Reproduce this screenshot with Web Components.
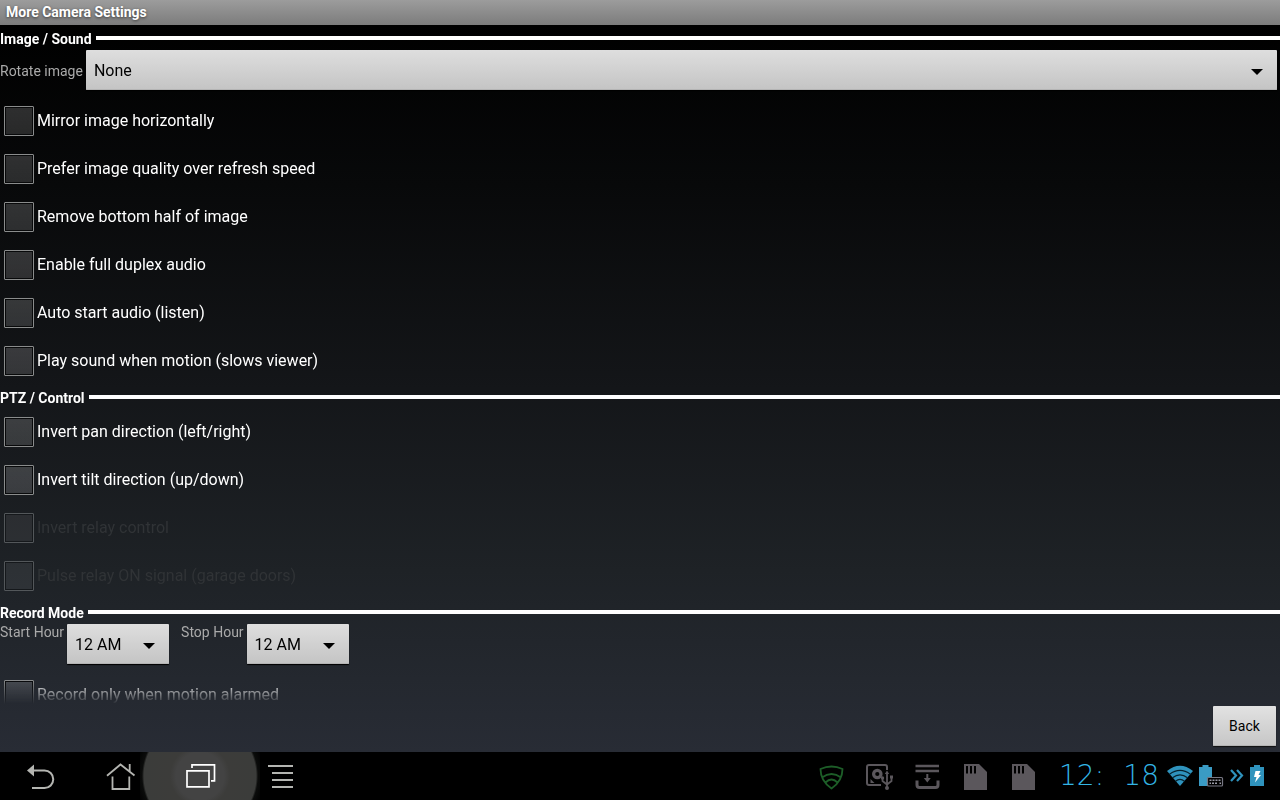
<!DOCTYPE html>
<html lang="en">
<head>
<meta charset="utf-8">
<title>More Camera Settings</title>
<style>
  html, body { height: 100%; margin: 0; background: #000; }
  body { font-family: Roboto, "Noto Sans", sans-serif; color: #fff; }
</style>
</head>
<body>
<settings-screen>
  <span slot="title">More Camera Settings</span>

  <settings-section>
    <span slot="heading">Image / Sound</span>
    <field-row>
      <spinner-field wide options="None|90 degrees|180 degrees|270 degrees">Rotate image</spinner-field>
    </field-row>
    <check-option>Mirror image horizontally</check-option>
    <check-option>Prefer image quality over refresh speed</check-option>
    <check-option>Remove bottom half of image</check-option>
    <check-option>Enable full duplex audio</check-option>
    <check-option>Auto start audio (listen)</check-option>
    <check-option>Play sound when motion (slows viewer)</check-option>
  </settings-section>

  <settings-section>
    <span slot="heading">PTZ / Control</span>
    <check-option>Invert pan direction (left/right)</check-option>
    <check-option>Invert tilt direction (up/down)</check-option>
    <check-option disabled>Invert relay control</check-option>
    <check-option disabled>Pulse relay ON signal (garage doors)</check-option>
  </settings-section>

  <settings-section>
    <span slot="heading">Record Mode</span>
    <field-row>
      <spinner-field options="12 AM|1 AM|2 AM|3 AM">Start Hour</spinner-field>
      <spinner-field options="12 AM|1 AM|2 AM|3 AM">Stop Hour</spinner-field>
    </field-row>
    <check-option>Record only when motion alarmed</check-option>
  </settings-section>

  <push-button slot="actions">Back</push-button>
  <system-bar slot="system"></system-bar>
</settings-screen>

<script>
function define(name, html, setup) {
  const template = document.createElement('template');
  template.innerHTML = html;
  customElements.define(name, class extends HTMLElement {
    constructor() {
      super();
      this.attachShadow({ mode: 'open' }).append(template.content.cloneNode(true));
    }
    connectedCallback() {
      if (setup) setup(this, this.shadowRoot);
    }
  });
}

define('settings-screen', `
  <style>
    :host { display: flex; flex-direction: column; height: 100vh; }
    header {
      flex: none; box-sizing: border-box; height: 25px; padding: 0 6px;
      background: linear-gradient(#9c9c9c, #7c7c7c);
    }
    h1 {
      margin: 0; font-size: 14px; line-height: 25px; font-weight: 700;
      text-shadow: 0 1px 3px rgba(0,0,0,.6);
    }
    .body {
      flex: 1; min-height: 0; display: flex; flex-direction: column;
      background: linear-gradient(#000 0%, #08090a 22%, #141619 50%, #1e2226 75%, #282c35 100%);
    }
    main {
      flex: 1; min-height: 0; overflow-y: auto; scrollbar-width: none; padding-top: 1px;
      mask-image: linear-gradient(#000 calc(100% - 24px), transparent);
    }
    footer { flex: none; display: flex; justify-content: flex-end; padding: 2px 4px 6px; }
  </style>
  <header><h1><slot name="title"></slot></h1></header>
  <div class="body">
    <main><slot></slot></main>
    <footer><slot name="actions"></slot></footer>
  </div>
  <slot name="system"></slot>
`);

define('settings-section', `
  <style>
    :host { display: block; }
    .head { display: flex; align-items: flex-start; gap: 4px; height: 23px; }
    h2 { margin: 0; font-size: 14px; line-height: 26px; font-weight: 700; }
    .rule { flex: 1; height: 4px; margin-top: 10px; background: #fff; }
  </style>
  <section>
    <div class="head"><h2><slot name="heading"></slot></h2><div class="rule"></div></div>
    <slot></slot>
  </section>
`);

define('field-row', `
  <style>
    :host { display: flex; gap: 12px; box-sizing: border-box; height: 48px; padding: 1px 3px 0 0; }
  </style>
  <slot></slot>
`);

define('check-option', `
  <style>
    :host { display: flex; align-items: center; height: 48px; padding-left: 4px; }
    label { display: flex; align-items: center; gap: 3px; font-size: 16px; line-height: 22px; }
    .text { padding-bottom: 1px; }
    input {
      appearance: none; flex: none; box-sizing: border-box; width: 30px; height: 30px; margin: 0;
      border: 1px solid #8a8c8c; border-radius: 1px;
      background: linear-gradient(rgba(255,255,255,.17), rgba(255,255,255,.14));
      box-shadow: inset 0 0 0 1px #08090a;
    }
    input:checked { background: #33b5e5; }
    :host([disabled]) .text { color: #303336; }
    :host([disabled]) input { border-color: #53575a; background: rgba(255,255,255,.07); box-shadow: inset 0 0 0 1px #15181b; }
  </style>
  <label><input type="checkbox"><span class="text"><slot></slot></span></label>
`, (host, root) => {
  root.querySelector('input').disabled = host.hasAttribute('disabled');
});

define('spinner-field', `
  <style>
    :host { display: flex; align-items: flex-start; gap: 3px; }
    :host([wide]) { flex: 1; align-items: center; height: 40px; }
    label { font-size: 14px; line-height: 17px; color: #aaa; white-space: nowrap; }
    :host([wide]) label { padding-top: 2px; }
    .box { display: grid; width: 102px; }
    :host([wide]) .box { width: auto; flex: 1; }
    select, svg { grid-area: 1 / 1; }
    select {
      appearance: none; width: 100%; height: 40px; margin: 0; padding: 2px 32px 0 8px;
      border: 0; border-radius: 1px; font: 16px/22px Roboto, "Noto Sans", sans-serif; color: #000;
      background: linear-gradient(#dedede, #c4c4c4);
      box-shadow: inset 0 -1px #b4b4b4, 0 1px 1px #000;
    }
    svg { justify-self: end; align-self: center; margin: 3px 14px 0 0; pointer-events: none; }
  </style>
  <label for="choice"><slot></slot></label>
  <div class="box">
    <select id="choice"></select>
    <svg width="12" height="6" viewBox="0 0 12 6"><path d="M0 0h12L6 6z" fill="#000"/></svg>
  </div>
`, (host, root) => {
  root.querySelector('select').replaceChildren(
    ...host.getAttribute('options').split('|').map(text => new Option(text)));
});

define('push-button', `
  <style>
    :host { display: block; }
    button {
      width: 63px; height: 40px; padding: 0; border: 0; border-radius: 1px;
      font: 14px/20px Roboto, "Noto Sans", sans-serif; color: #000;
      background: linear-gradient(#e2e2e2, #c6c6c6);
      box-shadow: inset 0 -1px #b4b4b4, 0 1px 1px #111;
    }
  </style>
  <button type="button"><slot></slot></button>
`);

define('system-bar', `
  <style>
    :host { display: flex; flex: none; justify-content: space-between; height: 48px; background: #000; overflow: hidden; }
    nav, .tray, .notices, .status, .clock { display: flex; align-items: center; }
    button { width: 80px; height: 48px; padding: 0; border: 0; background: none; display: grid; place-items: center; }
    .pressed {
      width: 120px; margin: 0 -20px;
      background: radial-gradient(circle, #434343 24px, #3c3c3a 30px, #3b3c3a 56px, #0b0c0b 58px, #000 66px);
    }
    svg { display: block; }
    .notices { gap: 16px; margin-right: 20px; }
    .clock {
      justify-content: space-between; width: 100px; margin-right: 8px;
      font: 200 28px/48px "DejaVu Sans Light", "DejaVu Sans", sans-serif; color: #33b5e5;
    }
    .status { gap: 6px; padding-right: 16px; }
  </style>
  <nav aria-label="System">
    <button type="button" aria-label="Back">
      <svg width="32" height="32" viewBox="0 0 32 32"><path d="M3 10.500l7-6v12z" fill="#b4b5b1"/><path d="M9 10.500h11.500a8.700 8.700 0 0 1 0 17.500H8" fill="none" stroke="#b4b5b1" stroke-width="2"/></svg>
    </button>
    <button type="button" aria-label="Home">
      <svg width="32" height="32" viewBox="0 0 32 32" fill="none" stroke="#b4b5b1" stroke-width="1.800"><path d="M3 15.700L16.500 4.500L30.500 15.500M25.700 4v8M8.500 16.500V29H25.300V16.500"/></svg>
    </button>
    <button type="button" class="pressed" aria-label="Recent apps">
      <svg width="32" height="32" viewBox="0 0 32 32" fill="none" stroke="#fff" stroke-width="1.700"><path d="M3 10.800h22v16H3zM8 8V4.800h22.500v16H27"/></svg>
    </button>
    <button type="button" aria-label="Menu">
      <svg width="32" height="32" viewBox="0 0 32 32" fill="none" stroke="#b4b5b1" stroke-width="2"><path d="M4 6h25M8 13h21M8 20h21M8 27h21"/></svg>
    </button>
  </nav>
  <div class="tray">
    <div class="notices">
      <svg width="32" height="32" viewBox="0 0 32 32" fill="none" stroke="#1d5e28" stroke-width="1.800"><path d="M5.500 9Q16.500 4 27.500 9Q27.500 21 16.500 28.500Q5.500 21 5.500 9zM7 17.500Q16.500 10.500 26 17.500M10.500 22.500Q16.500 16.500 22.500 22.500"/></svg>
      <svg width="32" height="32" viewBox="0 0 32 32" fill="none" stroke="#5b575c" stroke-width="2"><path d="M24 10V7q0-2-2-2H6Q4 5 4 7v16q0 2 2 2h12"/><circle cx="14.300" cy="14" r="3.700" stroke-width="3.200"/><path d="M7.500 19v4h4zM24 10.500l2.200 3.500h-4.400z" fill="#5b575c" stroke="none"/><path d="M24 13v14M19.500 18v3l4.500 3.500 4.500-3.500v-4" stroke-width="1.800"/><circle cx="24" cy="28" r="2" fill="#5b575c" stroke="none"/><circle cx="19.500" cy="18" r="1.700" fill="#5b575c" stroke="none"/><path d="M27 15.500h3v3h-3z" fill="#5b575c" stroke="none"/></svg>
      <svg width="32" height="32" viewBox="0 0 32 32" fill="none" stroke="#5b575c" stroke-width="3"><path d="M4.500 6h23.500M4.500 11h23.500" stroke-width="2.600"/><path d="M6 20.500V25q0 2.500 2.500 2.500h16Q27 27.500 27 25v-4.500"/><path d="M16.300 14v5" stroke-width="2"/><path d="M12.800 18h7l-3.500 4.500z" fill="#5b575c" stroke="none"/></svg>
      <svg width="32" height="32" viewBox="0 0 32 32"><path d="M5 4h15l8 8v18H5z" fill="#5b575c"/><path d="M8 6v7.500M12 6v7.500M16 6v7.500" stroke="#000" stroke-width="2"/></svg>
      <svg width="32" height="32" viewBox="0 0 32 32"><path d="M5 4h15l8 8v18H5z" fill="#5b575c"/><path d="M8 6v7.500M12 6v7.500M16 6v7.500" stroke="#000" stroke-width="2"/></svg>
    </div>
    <div class="clock"><span>12:</span><span>18</span></div>
    <div class="status">
      <svg width="26" height="22" viewBox="0 0 26 22"><path d="M0 6Q13-4.500 26 6L13 21z" fill="#2f93bd"/><path d="M2.500 9.300Q13 1.500 23.500 9.300M5.500 12.800Q13 7 20.500 12.800M8.500 16.200Q13 12.500 17.500 16.200" fill="none" stroke="#06222e" stroke-width="1.200"/></svg>
      <svg width="25" height="22" viewBox="0 0 25 22"><path d="M0 2h3.500V0h6v2H13v19H0z" fill="#3a9bc4"/><rect x="8.500" y="12.500" width="15" height="8.500" rx="1" fill="#000" stroke="#777783" stroke-width="1.200"/><path d="M10.500 15.200h11.500M10.500 18.200h1.500M13 18.200h6M20.500 18.200h1.500" stroke="#9a9aa6" stroke-width="1.500" stroke-dasharray="2 1"/></svg>
      <svg width="14" height="22" viewBox="0 0 14 22" fill="none" stroke="#2f93bd" stroke-width="2.200"><path d="M1 5l5 5.500L1 16M7 5l5 5.500L7 16"/></svg>
      <svg width="14" height="22" viewBox="0 0 14 22"><path d="M0 2h4V0h6v2h4v19H0z" fill="#2f93bd"/><path d="M5.500 6h5L8.500 10H11l-6 7.500 1.500-5.500H4z" fill="#fff"/></svg>
    </div>
  </div>
`);
</script>
</body>
</html>
